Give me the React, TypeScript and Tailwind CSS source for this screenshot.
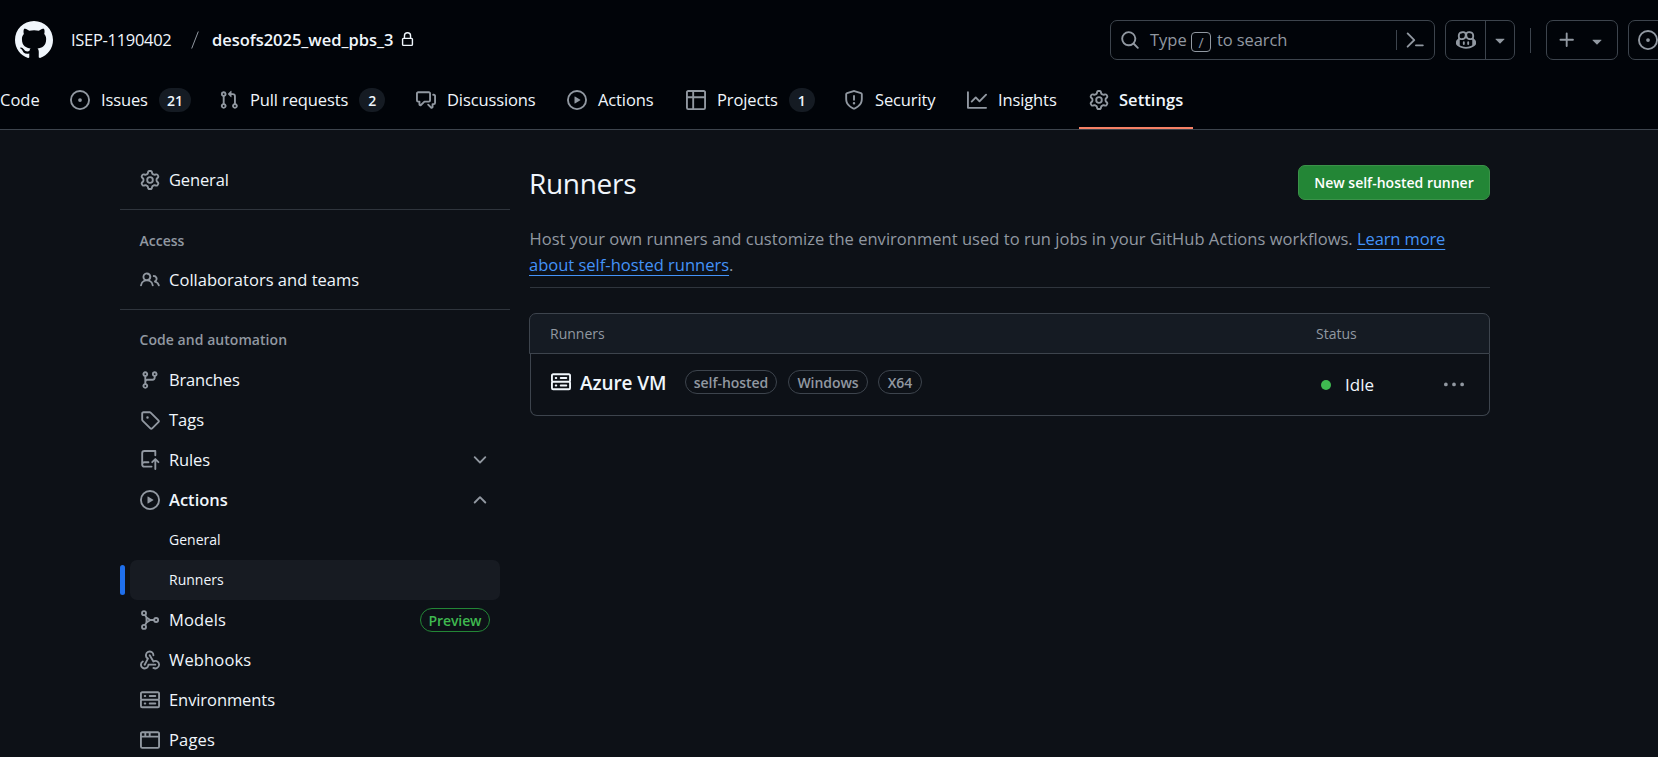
import type { ReactNode } from "react";

const paths = {
  github:
    "M8 0C3.58 0 0 3.58 0 8c0 3.54 2.29 6.53 5.47 7.59.4.07.55-.17.55-.38 0-.19-.01-.82-.01-1.49-2.01.37-2.53-.49-2.69-.94-.09-.23-.48-.94-.82-1.13-.28-.15-.68-.52-.01-.53.63-.01 1.08.58 1.23.82.72 1.21 1.87.87 2.33.66.07-.52.28-.87.51-1.07-1.78-.2-3.64-.89-3.64-3.95 0-.87.31-1.59.82-2.15-.08-.2-.36-1.02.08-2.12 0 0 .67-.21 2.2.82.64-.18 1.32-.27 2-.27.68 0 1.36.09 2 .27 1.53-1.04 2.2-.82 2.2-.82.44 1.1.16 1.92.08 2.12.51.56.82 1.27.82 2.15 0 3.07-1.87 3.75-3.65 3.95.29.25.54.73.54 1.48 0 1.07-.01 1.93-.01 2.2 0 .21.15.46.55.38A8.013 8.013 0 0 0 16 8c0-4.42-3.58-8-8-8Z",
  issue:
    "M8 9.5a1.5 1.5 0 1 0 0-3 1.5 1.5 0 0 0 0 3ZM8 0a8 8 0 1 1 0 16A8 8 0 0 1 8 0ZM1.5 8a6.5 6.5 0 1 0 13 0 6.5 6.5 0 0 0-13 0Z",
  pull: "M1.5 3.25a2.25 2.25 0 1 1 3 2.122v5.256a2.251 2.251 0 1 1-1.5 0V5.372A2.25 2.25 0 0 1 1.5 3.25Zm5.677-.177L9.573.677A.25.25 0 0 1 10 .854V2.5h1A2.5 2.5 0 0 1 13.5 5v5.628a2.251 2.251 0 1 1-1.5 0V5a1 1 0 0 0-1-1h-1v1.646a.25.25 0 0 1-.427.177L7.177 3.427a.25.25 0 0 1 0-.354ZM3.75 2.5a.75.75 0 1 0 0 1.5.75.75 0 0 0 0-1.5Zm0 9.5a.75.75 0 1 0 0 1.5.75.75 0 0 0 0-1.5Zm8.25.75a.75.75 0 1 0 1.5 0 .75.75 0 0 0-1.5 0Z",
  discussion:
    "M1.75 1h8.5c.966 0 1.75.784 1.75 1.75v5.5A1.75 1.75 0 0 1 10.25 10H7.061l-2.574 2.573A1.458 1.458 0 0 1 2 11.543V10h-.25A1.75 1.75 0 0 1 0 8.25v-5.5C0 1.784.784 1 1.75 1ZM1.5 2.75v5.5c0 .138.112.25.25.25h1a.75.75 0 0 1 .75.75v2.19l2.72-2.72a.749.749 0 0 1 .53-.22h3.5a.25.25 0 0 0 .25-.25v-5.5a.25.25 0 0 0-.25-.25h-8.5a.25.25 0 0 0-.25.25Zm13 2a.25.25 0 0 0-.25-.25h-.5a.75.75 0 0 1 0-1.5h.5c.966 0 1.75.784 1.75 1.75v5.5A1.75 1.75 0 0 1 14.25 12H14v1.543a1.458 1.458 0 0 1-2.487 1.03L9.22 12.28a.749.749 0 0 1 .326-1.275.749.749 0 0 1 .734.215l2.22 2.22v-2.19a.75.75 0 0 1 .75-.75h1a.25.25 0 0 0 .25-.25Z",
  play: "M8 0a8 8 0 1 1 0 16A8 8 0 0 1 8 0ZM1.5 8a6.5 6.5 0 1 0 13 0 6.5 6.5 0 0 0-13 0Zm4.879-2.773 4.264 2.559a.25.25 0 0 1 0 .428l-4.264 2.559A.25.25 0 0 1 6 10.559V5.442a.25.25 0 0 1 .379-.215Z",
  table:
    "M0 1.75C0 .784.784 0 1.75 0h12.5C15.216 0 16 .784 16 1.75v12.5A1.75 1.75 0 0 1 14.25 16H1.75A1.75 1.75 0 0 1 0 14.25ZM6.5 6.5v8h7.75a.25.25 0 0 0 .25-.25V6.5Zm8-1.5V1.75a.25.25 0 0 0-.25-.25H6.5V5Zm-13 1.5v7.75c0 .138.112.25.25.25H5v-8ZM5 5V1.5H1.75a.25.25 0 0 0-.25.25V5Z",
  shield:
    "M7.467.133a1.748 1.748 0 0 1 1.066 0l5.25 1.68A1.75 1.75 0 0 1 15 3.48V7c0 1.566-.32 3.182-1.303 4.682-.983 1.498-2.585 2.813-5.032 3.855a1.697 1.697 0 0 1-1.33 0c-2.447-1.042-4.049-2.357-5.032-3.855C1.32 10.182 1 8.566 1 7V3.48a1.75 1.75 0 0 1 1.217-1.667Zm.61 1.429a.25.25 0 0 0-.153 0l-5.25 1.68a.25.25 0 0 0-.174.238V7c0 1.358.275 2.666 1.057 3.86.784 1.194 2.121 2.34 4.366 3.297a.196.196 0 0 0 .154 0c2.245-.956 3.582-2.104 4.366-3.298C13.225 9.666 13.5 8.36 13.5 7V3.48a.251.251 0 0 0-.174-.237l-5.25-1.68ZM8.75 4.75v3a.75.75 0 0 1-1.5 0v-3a.75.75 0 0 1 1.5 0ZM9 10.5a1 1 0 1 1-2 0 1 1 0 0 1 2 0Z",
  graph:
    "M1.5 1.75V13.5h13.75a.75.75 0 0 1 0 1.5H.75a.75.75 0 0 1-.75-.75V1.75a.75.75 0 0 1 1.5 0Zm14.28 2.53-5.25 5.25a.75.75 0 0 1-1.06 0L7 7.06 4.28 9.78a.751.751 0 0 1-1.042-.018.751.751 0 0 1-.018-1.042l3.25-3.25a.75.75 0 0 1 1.06 0L10 7.94l4.72-4.72a.751.751 0 0 1 1.042.018.751.751 0 0 1 .018 1.042Z",
  gear: "M8 0a8.2 8.2 0 0 1 .701.031C9.444.095 9.99.645 10.16 1.29l.288 1.107c.018.066.079.158.212.224.231.114.454.243.668.386.123.082.233.09.299.071l1.103-.303c.644-.176 1.392.021 1.82.63.27.385.506.792.704 1.218.315.675.111 1.422-.364 1.891l-.814.806c-.049.048-.098.147-.088.294.016.257.016.515 0 .772-.01.147.038.246.088.294l.814.806c.475.469.679 1.216.364 1.891a7.977 7.977 0 0 1-.704 1.217c-.428.61-1.176.807-1.82.63l-1.102-.302c-.067-.019-.177-.011-.3.071a5.909 5.909 0 0 1-.668.386c-.133.066-.194.158-.211.224l-.29 1.106c-.168.646-.715 1.196-1.458 1.26a8.006 8.006 0 0 1-1.402 0c-.743-.064-1.289-.614-1.458-1.26l-.289-1.106c-.018-.066-.079-.158-.212-.224a5.738 5.738 0 0 1-.668-.386c-.123-.082-.233-.09-.299-.071l-1.103.303c-.644.176-1.392-.021-1.82-.63a8.12 8.12 0 0 1-.704-1.218c-.315-.675-.111-1.422.363-1.891l.815-.806c.05-.048.098-.147.088-.294a6.214 6.214 0 0 1 0-.772c.01-.147-.038-.246-.088-.294l-.815-.806C.635 6.045.431 5.298.746 4.623a7.92 7.92 0 0 1 .704-1.217c.428-.61 1.176-.807 1.82-.63l1.102.302c.067.019.177.011.3-.071.214-.143.437-.272.668-.386.133-.066.194-.158.211-.224l.29-1.106C6.009.645 6.556.095 7.299.03 7.53.01 7.764 0 8 0Zm-.571 1.525c-.036.003-.108.036-.137.146l-.289 1.105c-.147.561-.549.967-.998 1.189-.173.086-.34.183-.5.29-.417.278-.97.423-1.529.27l-1.103-.303c-.109-.03-.175.016-.195.045-.22.312-.412.644-.573.99-.014.031-.021.11.059.19l.815.806c.411.406.562.957.53 1.456a4.709 4.709 0 0 0 0 .582c.032.499-.119 1.05-.53 1.456l-.815.806c-.081.08-.073.159-.059.19.162.346.353.677.573.989.02.03.085.076.195.046l1.102-.303c.56-.153 1.113-.008 1.53.27.161.107.328.204.501.29.447.222.85.629.997 1.189l.289 1.105c.029.109.101.143.137.146a6.6 6.6 0 0 0 1.142 0c.036-.003.108-.036.137-.146l.289-1.105c.147-.561.549-.967.998-1.189.173-.086.34-.183.5-.29.417-.278.97-.423 1.529-.27l1.103.303c.109.029.175-.016.195-.045.22-.313.411-.644.573-.99.014-.031.021-.11-.059-.19l-.815-.806c-.411-.406-.562-.957-.53-1.456a4.709 4.709 0 0 0 0-.582c-.032-.499.119-1.05.53-1.456l.815-.806c.081-.08.073-.159.059-.19a6.464 6.464 0 0 0-.573-.989c-.02-.03-.085-.076-.195-.046l-1.102.303c-.56.153-1.113.008-1.53-.27a4.44 4.44 0 0 0-.501-.29c-.447-.222-.85-.629-.997-1.189l-.289-1.105c-.029-.11-.101-.143-.137-.146a6.6 6.6 0 0 0-1.142 0ZM11 8a3 3 0 1 1-6 0 3 3 0 0 1 6 0ZM9.5 8a1.5 1.5 0 1 0-3.001.001A1.5 1.5 0 0 0 9.5 8Z",
  lock: "M4 4a4 4 0 0 1 8 0v2h.25c.966 0 1.75.784 1.75 1.75v5.5A1.75 1.75 0 0 1 12.25 15h-8.5A1.75 1.75 0 0 1 2 13.25v-5.5C2 6.784 2.784 6 3.75 6H4Zm8.25 3.5h-8.5a.25.25 0 0 0-.25.25v5.5c0 .138.112.25.25.25h8.5a.25.25 0 0 0 .25-.25v-5.5a.25.25 0 0 0-.25-.25ZM10.5 6V4a2.5 2.5 0 1 0-5 0v2Z",
  search:
    "M10.68 11.74a6 6 0 0 1-7.922-8.982 6 6 0 0 1 8.982 7.922l3.04 3.04a.749.749 0 0 1-.326 1.275.749.749 0 0 1-.734-.215ZM11.5 7a4.499 4.499 0 1 0-8.997 0A4.499 4.499 0 0 0 11.5 7Z",
  palette:
    "m6.354 8.04-4.773 4.773a.75.75 0 1 0 1.061 1.06L7.945 8.57a.75.75 0 0 0 0-1.06L2.642 2.206a.75.75 0 0 0-1.06 1.061L6.353 8.04ZM8.75 11.5a.75.75 0 0 0 0 1.5h5.5a.75.75 0 0 0 0-1.5h-5.5Z",
  copilot:
    "M7.998 15.035c-4.562 0-7.873-2.914-7.998-3.749V9.338c.085-.628.677-1.686 1.588-2.065.013-.07.024-.143.036-.218.029-.183.06-.384.126-.612-.201-.508-.254-1.084-.254-1.656 0-.87.128-1.769.693-2.484.579-.733 1.494-1.124 2.724-1.261 1.206-.134 2.262.034 2.944.765.05.053.096.108.139.165.044-.057.094-.112.143-.165.682-.731 1.738-.899 2.944-.765 1.23.137 2.145.528 2.724 1.261.566.715.693 1.614.693 2.484 0 .572-.053 1.148-.254 1.656.066.228.098.429.126.612.012.076.024.148.037.218.924.385 1.522 1.471 1.591 2.095v1.872c0 .766-3.351 3.795-8.002 3.795Zm0-1.485c2.28 0 4.584-1.11 5.002-1.433V7.862l-.023-.116c-.49.21-1.075.291-1.727.291-1.146 0-2.059-.327-2.71-.991A3.222 3.222 0 0 1 8 6.303a3.24 3.24 0 0 1-.544.743c-.65.664-1.563.991-2.71.991-.652 0-1.236-.081-1.727-.291l-.023.116v4.255c.419.323 2.722 1.433 5.002 1.433ZM6.762 2.83c-.193-.206-.637-.413-1.682-.297-1.019.113-1.479.404-1.713.7-.247.312-.369.789-.369 1.554 0 .793.129 1.171.308 1.371.162.181.519.379 1.442.379.853 0 1.339-.235 1.638-.54.315-.322.527-.827.617-1.553.117-.935-.037-1.395-.241-1.614Zm4.155-.297c-1.044-.116-1.488.091-1.681.297-.204.219-.359.679-.242 1.614.091.726.303 1.231.618 1.553.299.305.784.54 1.638.54.922 0 1.28-.198 1.442-.379.179-.2.308-.578.308-1.371 0-.765-.123-1.242-.37-1.554-.233-.296-.693-.587-1.713-.7ZM6.25 9.037a.75.75 0 0 1 .75.75v1.501a.75.75 0 0 1-1.5 0V9.787a.75.75 0 0 1 .75-.75Zm4.25.75v1.501a.75.75 0 0 1-1.5 0V9.787a.75.75 0 0 1 1.5 0Z",
  caret:
    "m4.427 7.427 3.396 3.396a.25.25 0 0 0 .354 0l3.396-3.396A.25.25 0 0 0 11.396 7H4.604a.25.25 0 0 0-.177.427Z",
  plus: "M7.75 2a.75.75 0 0 1 .75.75V7h4.25a.75.75 0 0 1 0 1.5H8.5v4.25a.75.75 0 0 1-1.5 0V8.5H2.75a.75.75 0 0 1 0-1.5H7V2.75A.75.75 0 0 1 7.75 2Z",
  people:
    "M2 5.5a3.5 3.5 0 1 1 5.898 2.549 5.508 5.508 0 0 1 3.034 4.084.75.75 0 1 1-1.482.235 4 4 0 0 0-7.9 0 .75.75 0 0 1-1.482-.236A5.507 5.507 0 0 1 3.102 8.05 3.493 3.493 0 0 1 2 5.5ZM11 4a3.001 3.001 0 0 1 2.22 5.018 5.01 5.01 0 0 1 2.56 3.012.749.749 0 0 1-.885.954.752.752 0 0 1-.549-.514 3.507 3.507 0 0 0-2.522-2.372.75.75 0 0 1-.574-.73v-.352a.75.75 0 0 1 .416-.672A1.5 1.5 0 0 0 11 5.5.75.75 0 0 1 11 4Zm-5.5-.5a2 2 0 1 0-.001 3.999A2 2 0 0 0 5.5 3.5Z",
  branch:
    "M9.5 3.25a2.25 2.25 0 1 1 3 2.122V6A2.5 2.5 0 0 1 10 8.5H6a1 1 0 0 0-1 1v1.128a2.251 2.251 0 1 1-1.5 0V5.372a2.25 2.25 0 1 1 1.5 0v1.836A2.493 2.493 0 0 1 6 7h4a1 1 0 0 0 1-1v-.628A2.25 2.25 0 0 1 9.5 3.25Zm-6 0a.75.75 0 1 0 1.5 0 .75.75 0 0 0-1.5 0Zm8.25-.75a.75.75 0 1 0 0 1.5.75.75 0 0 0 0-1.5ZM4.25 12a.75.75 0 1 0 0 1.5.75.75 0 0 0 0-1.5Z",
  tag: "M1 7.775V2.75C1 1.784 1.784 1 2.75 1h5.025c.464 0 .91.184 1.238.513l6.25 6.25a1.75 1.75 0 0 1 0 2.474l-5.026 5.026a1.75 1.75 0 0 1-2.474 0l-6.25-6.25A1.752 1.752 0 0 1 1 7.775Zm1.5 0c0 .066.026.13.073.177l6.25 6.25a.25.25 0 0 0 .354 0l5.025-5.025a.25.25 0 0 0 0-.354l-6.25-6.25a.25.25 0 0 0-.177-.073H2.75a.25.25 0 0 0-.25.25ZM6 5a1 1 0 1 1 0 2 1 1 0 0 1 0-2Z",
  rules:
    "M1 2.5A2.5 2.5 0 0 1 3.5 0h8.75a.75.75 0 0 1 .75.75v3.5a.75.75 0 0 1-1.5 0V1.5h-8a1 1 0 0 0-1 1v6.708A2.493 2.493 0 0 1 3.5 9h3.25a.75.75 0 0 1 0 1.5H3.5a1 1 0 0 0 0 2h5.75a.75.75 0 0 1 0 1.5H3.5A2.5 2.5 0 0 1 1 11.5Zm13.23 7.79h-.001l-1.224-1.224v6.184a.75.75 0 0 1-1.5 0V9.066L10.28 10.29a.75.75 0 0 1-1.06-1.061l2.505-2.504a.75.75 0 0 1 1.06 0L15.29 9.23a.751.751 0 0 1-.018 1.042.751.751 0 0 1-1.042.018Z",
  chevronDown:
    "M12.78 5.22a.749.749 0 0 1 0 1.06l-4.25 4.25a.749.749 0 0 1-1.06 0L3.22 6.28a.749.749 0 1 1 1.06-1.06L8 8.939l3.72-3.719a.749.749 0 0 1 1.06 0Z",
  chevronUp:
    "M3.22 10.53a.749.749 0 0 1 0-1.06l4.25-4.25a.749.749 0 0 1 1.06 0l4.25 4.25a.749.749 0 1 1-1.06 1.06L8 6.811 4.28 10.53a.749.749 0 0 1-1.06 0Z",
  webhook:
    "M5.5 4.25a2.25 2.25 0 0 1 4.5 0 .75.75 0 0 0 1.5 0 3.75 3.75 0 1 0-6.14 2.889l-2.272 4.258a.75.75 0 0 0 1.324.706L7 7.25a.75.75 0 0 0-.309-1.015A2.25 2.25 0 0 1 5.5 4.25ZM7.364 3.607a.75.75 0 0 1 1.03.257l2.608 4.349a3.75 3.75 0 1 1-.628 6.785.75.75 0 0 1 .752-1.299 2.25 2.25 0 1 0-.033-3.88.75.75 0 0 1-1.03-.256L7.107 4.636a.75.75 0 0 1 .257-1.03ZM2.9 8.776A.75.75 0 0 1 2.625 9.8 2.25 2.25 0 1 0 6 11.75a.75.75 0 0 1 .75-.751h5.5a.75.75 0 0 1 0 1.5H7.425a3.751 3.751 0 1 1-5.55-3.998.75.75 0 0 1 1.024.274Z",
  server:
    "M1.75 1h12.5c.966 0 1.75.784 1.75 1.75v4c0 .372-.116.717-.314 1 .198.283.314.628.314 1v4a1.75 1.75 0 0 1-1.75 1.75H1.75A1.75 1.75 0 0 1 0 12.75v-4c0-.358.109-.707.314-1a1.739 1.739 0 0 1-.314-1v-4C0 1.784.784 1 1.75 1ZM1.5 2.75v4c0 .138.112.25.25.25h12.5a.25.25 0 0 0 .25-.25v-4a.25.25 0 0 0-.25-.25H1.75a.25.25 0 0 0-.25.25Zm.25 5.75a.25.25 0 0 0-.25.25v4c0 .138.112.25.25.25h12.5a.25.25 0 0 0 .25-.25v-4a.25.25 0 0 0-.25-.25ZM7 4.75A.75.75 0 0 1 7.75 4h4.5a.75.75 0 0 1 0 1.5h-4.5A.75.75 0 0 1 7 4.75ZM7.75 10h4.5a.75.75 0 0 1 0 1.5h-4.5a.75.75 0 0 1 0-1.5ZM3 4.75A.75.75 0 0 1 3.75 4h.5a.75.75 0 0 1 0 1.5h-.5A.75.75 0 0 1 3 4.75ZM3.75 10h.5a.75.75 0 0 1 0 1.5h-.5a.75.75 0 0 1 0-1.5Z",
  browser:
    "M0 2.75C0 1.784.784 1 1.75 1h12.5c.966 0 1.75.784 1.75 1.75v10.5A1.75 1.75 0 0 1 14.25 15H1.75A1.75 1.75 0 0 1 0 13.25ZM14.5 6h-13v7.25c0 .138.112.25.25.25h12.5a.25.25 0 0 0 .25-.25Zm-6-3.5v2h6V2.75a.25.25 0 0 0-.25-.25ZM5 2.5v2h2v-2Zm-3.25 0a.25.25 0 0 0-.25.25V4.5h2v-2Z",
  kebab:
    "M8 9a1.5 1.5 0 1 0 0-3 1.5 1.5 0 0 0 0 3ZM1.5 9a1.5 1.5 0 1 0 0-3 1.5 1.5 0 0 0 0 3Zm13 0a1.5 1.5 0 1 0 0-3 1.5 1.5 0 0 0 0 3Z",
};

type IconName = keyof typeof paths;

function Icon({ name, className = "size-5" }: { name: IconName; className?: string }) {
  return (
    <svg viewBox="0 0 16 16" fill="currentColor" className={`shrink-0 ${className}`} aria-hidden="true">
      <path d={paths[name]} />
    </svg>
  );
}

function ModelIcon() {
  return (
    <svg
      viewBox="0 0 16 16"
      fill="none"
      stroke="currentColor"
      strokeWidth="1.5"
      strokeLinejoin="round"
      className="size-5 shrink-0"
      aria-hidden="true"
    >
      <circle cx="3.2" cy="2.5" r="1.6" />
      <circle cx="3.2" cy="13.5" r="1.6" />
      <circle cx="12.9" cy="8" r="1.6" />
      <path d="M4 3.9 5.2 6v4L4 12.1M5.2 6 8.2 8 5.2 10M8.2 8h3.1" />
    </svg>
  );
}

type Tab = { icon: IconName; label: string; count?: string; width: string };

const tabs: Tab[] = [
  { icon: "issue", label: "Issues", count: "21", width: "w-[149px]" },
  { icon: "pull", label: "Pull requests", count: "2", width: "w-[197px]" },
  { icon: "discussion", label: "Discussions", width: "w-[151px]" },
  { icon: "play", label: "Actions", width: "w-[119px]" },
  { icon: "table", label: "Projects", count: "1", width: "w-[158px]" },
  { icon: "shield", label: "Security", width: "w-[123px]" },
  { icon: "graph", label: "Insights", width: "w-[112px]" },
];

function Header() {
  return (
    <header className="h-[130px] overflow-hidden border-b border-[#3d444d] bg-[#010409]">
      <div className="flex h-20 items-center pl-[15px]">
        <Icon name="github" className="size-[38px] text-[#f0f6fc]" />
        <div className="ml-[18px] flex w-[1039px] shrink-0 items-center text-[16.5px]">
          <span className="w-[120px] pt-px tracking-[-0.3px]">ISEP-1190402</span>
          <svg viewBox="0 0 8 18" className="h-[18px] w-2 text-[#9198a1]" fill="none" stroke="currentColor">
            <path d="M7.3.5.7 17.5" />
          </svg>
          <span className="ml-[13px] w-[188px] pt-px font-semibold tracking-[-0.03px]">desofs2025_wed_pbs_3</span>
          <Icon name="lock" className="-mt-[2px] size-[15px] text-[#f0f6fc]" />
        </div>
        <div className="flex h-10 w-[325px] shrink-0 items-center rounded-[7px] border border-[#3d444d] pr-[9px] pl-[9px] text-[#9198a1]">
          <Icon name="search" />
          <span className="ml-[10px] w-[37px] pt-px text-[16.5px]">Type</span>
          <span className="mx-[4px] mt-1 flex h-5 w-5 shrink-0 items-center justify-center rounded-[4px] border border-[#9198a1] text-[14px]">
            /
          </span>
          <span className="ml-[2px] pt-px text-[16.5px] tracking-[-0.1px]">to search</span>
          <span className="mr-[8px] ml-auto h-5 w-px bg-[#3d444d]" />
          <Icon name="palette" />
        </div>
        <div className="ml-[10px] flex h-10 w-[70px] shrink-0 rounded-[7px] border border-[#3d444d] text-[#9198a1]">
          <span className="flex w-[40px] items-center justify-center border-r border-[#3d444d]">
            <Icon name="copilot" />
          </span>
          <span className="flex flex-1 items-center justify-center">
            <Icon name="caret" />
          </span>
        </div>
        <span className="ml-[15px] h-[25px] w-px shrink-0 bg-[#3d444d]" />
        <div className="ml-[15px] flex h-10 w-[72px] shrink-0 items-center rounded-[7px] border border-[#3d444d] pl-[10px] text-[#9198a1]">
          <Icon name="plus" />
          <Icon name="caret" className="mt-px ml-[10px] size-5" />
        </div>
        <div className="ml-[10px] flex size-10 shrink-0 items-center rounded-[7px] border border-[#3d444d] pl-[9px] text-[#9198a1]">
          <Icon name="issue" />
        </div>
      </div>
      <nav className="flex h-[50px] text-[16.5px]">
        <span className="flex h-10 w-[70px] shrink-0 items-center pt-px">
          <span>Code</span>
        </span>
        {tabs.map((t) => (
          <a key={t.label} className={`flex h-10 shrink-0 items-center ${t.width}`}>
            <Icon name={t.icon} className="size-5 text-[#9198a1]" />
            <span className="ml-[11px] pt-px tracking-[-0.12px] whitespace-nowrap">{t.label}</span>
            {t.count && (
              <span className="ml-[11px] flex h-6 min-w-[26px] items-center justify-center rounded-full bg-[#151b23] px-[8px] text-[14px] font-semibold">
                {t.count}
              </span>
            )}
          </a>
        ))}
        <a className="flex h-[49px] w-[114px] shrink-0 border-b-2 border-[#f78166] pl-[10px]">
          <span className="flex h-10 items-center">
            <Icon name="gear" className="size-5 text-[#9198a1]" />
            <span className="ml-[10px] pt-px font-semibold tracking-[0.05px]">Settings</span>
          </span>
        </a>
      </nav>
    </header>
  );
}

function Row({
  icon,
  label,
  className = "tracking-[-0.15px]",
  trailing,
}: {
  icon: ReactNode;
  label: string;
  className?: string;
  trailing?: ReactNode;
}) {
  return (
    <li className="flex h-10 items-center px-5 text-[16.5px]">
      <span className="text-[#9198a1]">{icon}</span>
      <span className={`ml-[9px] flex-1 ${className}`}>{label}</span>
      {trailing}
    </li>
  );
}

function Sidebar() {
  return (
    <aside className="w-[390px] shrink-0 pt-[30px]">
      <ul>
        <Row icon={<Icon name="gear" />} label="General" />
      </ul>
      <div className="mt-[9px] h-px bg-[#2f353d]" />
      <h3 className="mt-[20px] h-[22px] pl-[19.5px] text-[14px] leading-[22px] font-semibold text-[#9198a1]">Access</h3>
      <ul className="mt-[8px]">
        <Row icon={<Icon name="people" />} label="Collaborators and teams" className="tracking-[0.03px]" />
      </ul>
      <div className="mt-[9px] h-px bg-[#2f353d]" />
      <h3 className="mt-[19px] h-[22px] pl-[19.5px] text-[14px] leading-[22px] font-semibold tracking-[0.05px] text-[#9198a1]">
        Code and automation
      </h3>
      <ul className="mt-[9px]">
        <Row icon={<Icon name="branch" />} label="Branches" />
        <Row icon={<Icon name="tag" />} label="Tags" className="tracking-normal" />
        <Row
          icon={<Icon name="rules" />}
          label="Rules"
          trailing={<Icon name="chevronDown" className="size-5 text-[#9198a1]" />}
        />
        <Row
          icon={<Icon name="play" />}
          label="Actions"
          className="font-semibold tracking-normal"
          trailing={<Icon name="chevronUp" className="size-5 text-[#9198a1]" />}
        />
        <li className="flex h-10 items-center pb-[2px] pl-[49px] text-[14px]">General</li>
        <li className="flex h-10 items-center gap-[5px] text-[14px]">
          <span className="h-[30px] w-[5px] rounded-[3px] bg-[#1f6feb]" />
          <span className="flex h-10 w-[370px] items-center rounded-[7px] bg-[#171b22] pb-[2px] pl-[39px]">Runners</span>
        </li>
        <Row
          icon={<ModelIcon />}
          label="Models"
          className="tracking-[0.15px]"
          trailing={
            <span className="flex h-6 w-[70px] items-center justify-center rounded-full border border-[#238636] text-[14px] font-semibold tracking-[-0.1px] text-[#3fb950]">
              Preview
            </span>
          }
        />
        <Row icon={<Icon name="webhook" />} label="Webhooks" className="tracking-[0.15px]" />
        <Row icon={<Icon name="server" />} label="Environments" className="tracking-[-0.08px]" />
        <Row icon={<Icon name="browser" />} label="Pages" className="tracking-[0.15px]" />
      </ul>
    </aside>
  );
}

function Label({ children, className }: { children: string; className: string }) {
  return (
    <span
      className={`flex h-6 items-center justify-center rounded-full border border-[#3d444d] text-[14px] font-semibold tracking-[-0.05px] text-[#9198a1] ${className}`}
    >
      {children}
    </span>
  );
}

function Runners() {
  return (
    <main className="w-[961px] shrink-0 pt-[35px]">
      <div className="flex h-[35px] items-center justify-between">
        <h1 className="pt-[2px] text-[28px] leading-[35px] tracking-[-0.3px]">Runners</h1>
        <button className="h-[35px] w-[192px] rounded-[7px] border border-[#3b9249] bg-[#238636] text-[14px] font-semibold text-white">
          New self-hosted runner
        </button>
      </div>
      <p className="mt-[26px] ml-px h-[62px] border-b border-[#2f353d] text-[16.5px] leading-[26px] text-[#9198a1]">
        <span className="-ml-[0.5px] tracking-[0.03px]">
          Host your own runners and customize the environment used to run jobs in your GitHub Actions workflows.{" "}
        </span>
        <a className="text-[#4493f8] underline decoration-1 underline-offset-[4px]">
          <span className="tracking-[-0.12px]">Learn more</span>
          <br />
          <span className="-ml-px">about self-hosted runners</span>
        </a>
        .
      </p>
      <section className="mt-[25px]">
        <div className="flex h-[41px] items-center rounded-t-[7px] border border-[#3d444d] bg-[#151b23] pl-[20px] text-[14px] text-[#9198a1]">
          <span className="w-[766px]">Runners</span>
          <span>Status</span>
        </div>
        <div className="ml-px flex h-[62px] items-center rounded-b-[7px] border border-t-0 border-[#3d444d] pl-[20px]">
          <Icon name="server" className="-mt-[6px] size-5 text-[#f0f6fc]" />
          <span className="ml-[9px] w-[105px] pb-[2px] text-[19px] font-semibold tracking-[-0.1px]">Azure VM</span>
          <span className="-mt-[5px] flex">
            <Label className="w-[92px]">self-hosted</Label>
            <Label className="ml-[11px] w-[80px]">Windows</Label>
            <Label className="ml-[10px] w-[44px]">X64</Label>
          </span>
          <span className="ml-[399px] size-[10px] rounded-full bg-[#3fb950]" />
          <span className="ml-[14px] w-[99px] text-[17px]">Idle</span>
          <Icon name="kebab" className="size-5 text-[#9198a1]" />
        </div>
      </section>
    </main>
  );
}

export default function App() {
  return (
    <div className="h-[757px] w-[1658px] overflow-hidden bg-[#0d1117] font-['Open_Sans','Noto_Sans',sans-serif] text-[#f0f6fc]">
      <Header />
      <div className="flex gap-[19px] pl-[120px]">
        <Sidebar />
        <Runners />
      </div>
    </div>
  );
}
